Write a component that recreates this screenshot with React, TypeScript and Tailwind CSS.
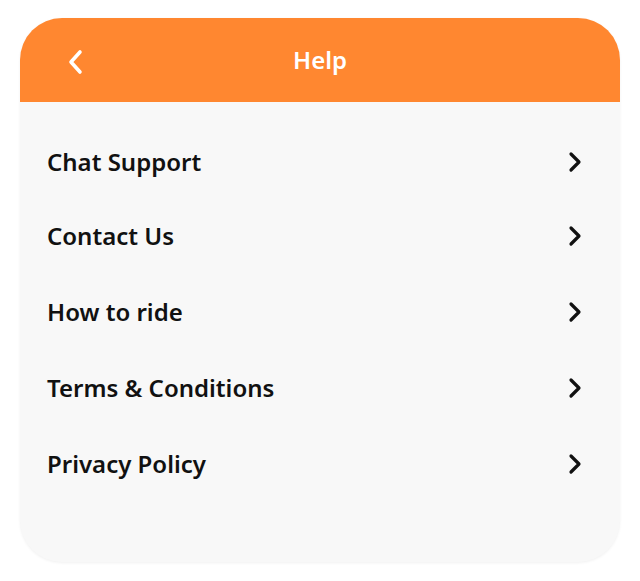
const items = ['Chat Support', 'Contact Us', 'How to ride', 'Terms & Conditions', 'Privacy Policy']

function Chevron({ dir }: { dir: 'left' | 'right' }) {
  return (
    <svg width="14" height="22" viewBox="0 0 14 22" fill="none">
      <path
        d={dir === 'right' ? 'M3 3l8 8-8 8' : 'M11 3l-8 8 8 8'}
        stroke="currentColor"
        strokeWidth="3.2"
        strokeLinecap="round"
        strokeLinejoin="round"
      />
    </svg>
  )
}

export default function App() {
  return (
    <div className="min-h-[581px] bg-white pt-[18px] px-5" style={{ fontFamily: '"Noto Sans", "Open Sans", sans-serif' }}>
      <div className="rounded-[42px] overflow-hidden bg-[#f8f8f8] shadow-[0_1px_3px_rgba(0,0,0,0.06)]">
        {/* header */}
        <div className="relative h-[84px] bg-[#ff8730] flex items-center justify-center">
          <button className="absolute left-[46px] top-[30px] text-white">
            <svg width="20" height="28" viewBox="0 0 20 28" fill="none">
              <path d="M14 4L5 14l9 10" stroke="currentColor" strokeWidth="3.6" strokeLinecap="round" strokeLinejoin="round" />
            </svg>
          </button>
          <h1 className="text-white text-[24px] font-semibold">Help</h1>
        </div>

        {/* menu */}
        <ul className="pt-[24px] pb-[60px]">
          {items.map((label, i) => (
            <li
              key={label}
              className={`${i === 0 ? 'h-[72px]' : 'h-[76px]'} flex items-center justify-between pl-[27px] pr-[38px] text-[#111]`}
            >
              <span className="text-[24px] font-semibold">{label}</span>
              <Chevron dir="right" />
            </li>
          ))}
        </ul>
      </div>
    </div>
  )
}
